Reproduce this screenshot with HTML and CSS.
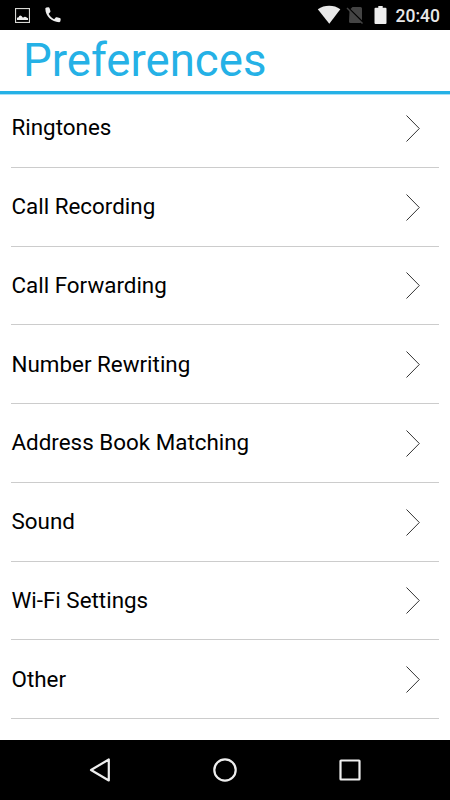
FILE: index.html
```html
<!DOCTYPE html>
<html lang="en">
<head>
    <meta charset="UTF-8">
    <meta name="viewport" content="width=device-width, initial-scale=1.0">
    <title>Preferences</title>
    <link rel="stylesheet" href="styles.css">
</head>
<body>
    <div class="status-bar">
        <svg width="15" height="15" viewBox="0 0 15 15">
            <rect x="0.5" y="0.5" width="14" height="14" fill="none" stroke="#d8d8d4" stroke-width="1.2"/>
            <path d="M2 12 V10 Q3 9 3.5 9.5 Q4.5 6.5 6.5 8 L8 9.7 Q9.5 8.2 11 9 Q12 10 13 10.2 V12 Z" fill="#eee"/>
        </svg>
        <svg class="icon-phone" width="20" height="20" viewBox="0 0 24 24">
            <path d="M6.8 10.6c1.4 2.8 3.8 5.2 6.6 6.6l1.8-2.1c.4-.4 1-.6 1.5-.4l3.4 1c.8.2 1.2.8 1.1 1.6l-.3 2c-.1.8-.7 1.3-1.5 1.3C10.500 20.600 3 13.300 2.800 4.600c0-.8.5-1.500 1.300-1.600l2.200-.3c.7-.1 1.300.3 1.500 1l1.100 3.500c.2.5 0 1.100-.4 1.500z" fill="#eee"/>
        </svg>
        <div class="status-right">
            <svg width="24" height="20" viewBox="0 0 24 20">
                <path d="M12.300 18.800 L0.800 4.300 C7.500 -0.300 17 -0.300 23.300 4.300 Z" fill="#e8e8e8"/>
            </svg>
            <svg class="icon-signal" width="18" height="20" viewBox="0 0 18 20">
                <path d="M6.500 2 H14.500 Q16 2 16 3.500 V15.300 L4.500 4 Z M3.500 5.700 L15 17 Q15 18 14 18 H4.500 Q3 18 3 16.500 Z" fill="#444"/>
                <path d="M1 3 L16.500 18.500" stroke="#444" stroke-width="1.4"/>
            </svg>
            <svg class="icon-battery" width="13" height="20" viewBox="0 0 13 20">
                <path d="M4.300 1 H8.700 V2.700 H11.500 Q12.500 2.700 12.500 3.700 V18 Q12.500 19 11.500 19 H1.500 Q0.500 19 0.500 18 V3.700 Q0.500 2.700 1.500 2.700 H4.300 Z" fill="#eee"/>
            </svg>
            <span class="clock">20:40</span>
        </div>
    </div>

    <h1 class="title">Preferences</h1>

    <div class="list">
        <div class="row"><span>Ringtones</span><svg class="chevron" viewBox="0 0 14 28"><path d="M0.5 1.500 L13.300 14.500 L0.5 27.500"/></svg></div>
        <div class="row"><span>Call Recording</span><svg class="chevron" viewBox="0 0 14 28"><path d="M0.5 1.500 L13.300 14.500 L0.5 27.500"/></svg></div>
        <div class="row"><span>Call Forwarding</span><svg class="chevron" viewBox="0 0 14 28"><path d="M0.5 1.500 L13.300 14.500 L0.5 27.500"/></svg></div>
        <div class="row"><span>Number Rewriting</span><svg class="chevron" viewBox="0 0 14 28"><path d="M0.5 1.500 L13.300 14.500 L0.5 27.500"/></svg></div>
        <div class="row"><span>Address Book Matching</span><svg class="chevron" viewBox="0 0 14 28"><path d="M0.5 1.500 L13.300 14.500 L0.5 27.500"/></svg></div>
        <div class="row"><span>Sound</span><svg class="chevron" viewBox="0 0 14 28"><path d="M0.5 1.500 L13.300 14.500 L0.5 27.500"/></svg></div>
        <div class="row"><span>Wi-Fi Settings</span><svg class="chevron" viewBox="0 0 14 28"><path d="M0.5 1.500 L13.300 14.500 L0.5 27.500"/></svg></div>
        <div class="row"><span>Other</span><svg class="chevron" viewBox="0 0 14 28"><path d="M0.5 1.500 L13.300 14.500 L0.5 27.500"/></svg></div>
    </div>

    <div class="nav-bar">
        <svg width="26" height="26" viewBox="0 0 26 26"><path d="M21.800 2.500 V23.500 L4 13 Z"/></svg>
        <svg width="26" height="26" viewBox="0 0 26 26"><circle cx="13" cy="13" r="10.700"/></svg>
        <svg width="26" height="26" viewBox="0 0 26 26"><rect x="3.500" y="3.500" width="19" height="19" rx="0.500"/></svg>
    </div>
</body>
</html>
```
FILE: styles.css
```css
* {
    box-sizing: border-box;
}
body {
    margin: 0;
    height: 800px;
    display: flex;
    flex-direction: column;
    overflow: hidden;
    background: #fff;
    color: #000;
    font-family: Roboto, sans-serif;
}
.status-bar {
    display: flex;
    align-items: center;
    height: 30px;
    padding: 0 10px 0 15px;
    background: #000;
    color: #e8e8e8;
}
.icon-phone {
    margin-left: 13px;
}
.status-right {
    display: flex;
    align-items: center;
    margin-left: auto;
}
.icon-signal {
    margin-left: 5px;
}
.icon-battery {
    margin-left: 10px;
}
.clock {
    margin-left: 9px;
    padding-top: 1px;
    font-size: 17.5px;
    font-weight: 500;
}
.title {
    margin: 0;
    height: 65px;
    padding-left: 23px;
    border-bottom: 1px solid #a9e0f6;
    box-shadow: inset 0 -3px #25b1e6;
    color: #25b1e6;
    font-size: 45.6px;
    font-weight: 400;
    line-height: 61px;
}
.list {
    flex: 1;
    padding: 0 11px;
    margin-top: -6px;
}
.row {
    display: flex;
    align-items: center;
    justify-content: space-between;
    height: 78.75px;
    padding-right: 19px;
    border-bottom: 1px solid #ccc;
    font-size: 22.4px;
}
.row span {
    padding: 0 0 1px 0.5px;
}
.chevron {
    width: 14px;
    height: 28px;
    fill: none;
    stroke: #333;
    stroke-width: 1;
}
.nav-bar {
    display: flex;
    align-items: center;
    justify-content: space-between;
    height: 60px;
    padding: 0 87px;
    background: #000;
}
.nav-bar svg {
    fill: none;
    stroke: #eee;
    stroke-width: 2.2;
    stroke-linejoin: round;
}
```
